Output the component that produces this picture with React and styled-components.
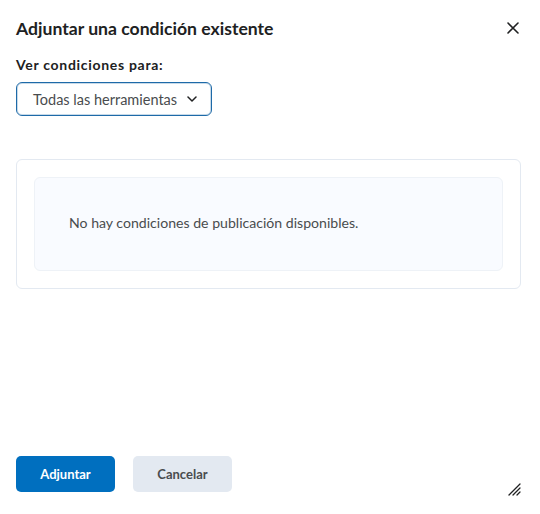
import React from "react";
import styled, { createGlobalStyle } from "styled-components";

const GlobalStyle = createGlobalStyle`
  html, body {
    margin: 0;
    padding: 0;
    background: #ffffff;
  }
  body {
    font-family: Lato, "Open Sans", "Liberation Sans", sans-serif;
    color: #494c4e;
  }
`;

const Dialog = styled.div`
  position: relative;
  width: 540px;
  height: 514px;
  box-sizing: border-box;
  padding: 16px 16px 0 16px;
  display: flex;
  flex-direction: column;
`;

const Header = styled.div`
  display: flex;
  align-items: center;
  justify-content: space-between;
  height: 28px;
  margin-top: -2px;
`;

const Title = styled.h1`
  margin: 0;
  font-size: 17.6px;
  font-weight: 700;
  color: #202122;
`;

const CloseButton = styled.button`
  border: none;
  background: none;
  padding: 0;
  width: 20px;
  height: 20px;
  margin-right: 1px;
  display: flex;
  align-items: center;
  justify-content: center;
  cursor: pointer;
`;

const Label = styled.div`
  margin-top: 14px;
  font-size: 14px;
  font-weight: 700;
  letter-spacing: 0.7px;
  color: #202122;
`;

const Select = styled.button`
  margin-top: 9px;
  width: 196px;
  height: 34px;
  box-sizing: border-box;
  border: 1px solid #1e6aa8;
  border-radius: 6px;
  background: #fff;
  display: flex;
  align-items: center;
  justify-content: space-between;
  padding: 0 14px 0 16px;
  white-space: nowrap;
  font-family: inherit;
  font-size: 14.5px;
  color: #494c4e;
  box-shadow: inset 0 0 0 1px rgba(30, 106, 168, 0.25);
`;

const Card = styled.div`
  margin-top: 43px;
  width: 505px;
  box-sizing: border-box;
  border: 1px solid #e3e9f1;
  border-radius: 6px;
  padding: 17px;
`;

const EmptyBox = styled.div`
  height: 94px;
  box-sizing: border-box;
  background: #f9fbff;
  border: 1px solid #eef2f7;
  border-radius: 6px;
  display: flex;
  align-items: center;
  padding: 0 34px 3px;
  font-size: 14.1px;
  color: #494c4e;
`;

const Footer = styled.div`
  margin-top: auto;
  margin-bottom: 22px;
  display: flex;
  gap: 18px;
`;

const Button = styled.button`
  width: 99px;
  height: 36px;
  border: none;
  border-radius: 5px;
  font-family: inherit;
  font-size: 13px;
  font-weight: 700;
  cursor: pointer;
  background: ${(p) => (p.$primary ? "#006fbf" : "#e3e9f1")};
  color: ${(p) => (p.$primary ? "#ffffff" : "#494c4e")};
`;

const Resize = styled.div`
  position: absolute;
  right: 19px;
  bottom: 21px;
  width: 13px;
  height: 13px;
`;

export default function App() {
  return (
    <>
      <GlobalStyle />
      <Dialog>
        <Header>
          <Title>Adjuntar una condición existente</Title>
          <CloseButton aria-label="Cerrar">
            <svg width="12" height="12" viewBox="0 0 12 12">
              <path d="M1 1 L11 11 M11 1 L1 11" stroke="#202122" strokeWidth="1.6" strokeLinecap="round" />
            </svg>
          </CloseButton>
        </Header>
        <Label>Ver condiciones para:</Label>
        <Select>
          Todas las herramientas
          <svg width="10" height="6" viewBox="0 0 10 6">
            <path d="M1 1 L5 5 L9 1" fill="none" stroke="#202122" strokeWidth="1.5" strokeLinecap="round" strokeLinejoin="round" />
          </svg>
        </Select>
        <Card>
          <EmptyBox>No hay condiciones de publicación disponibles.</EmptyBox>
        </Card>
        <Footer>
          <Button $primary>Adjuntar</Button>
          <Button>Cancelar</Button>
        </Footer>
        <Resize>
          <svg width="13" height="13" viewBox="0 0 13 13">
            <path d="M1 12 L12 1 M5 12 L12 5 M9 12 L12 9" stroke="#202122" strokeWidth="1.3" strokeLinecap="round" />
          </svg>
        </Resize>
      </Dialog>
    </>
  );
}
